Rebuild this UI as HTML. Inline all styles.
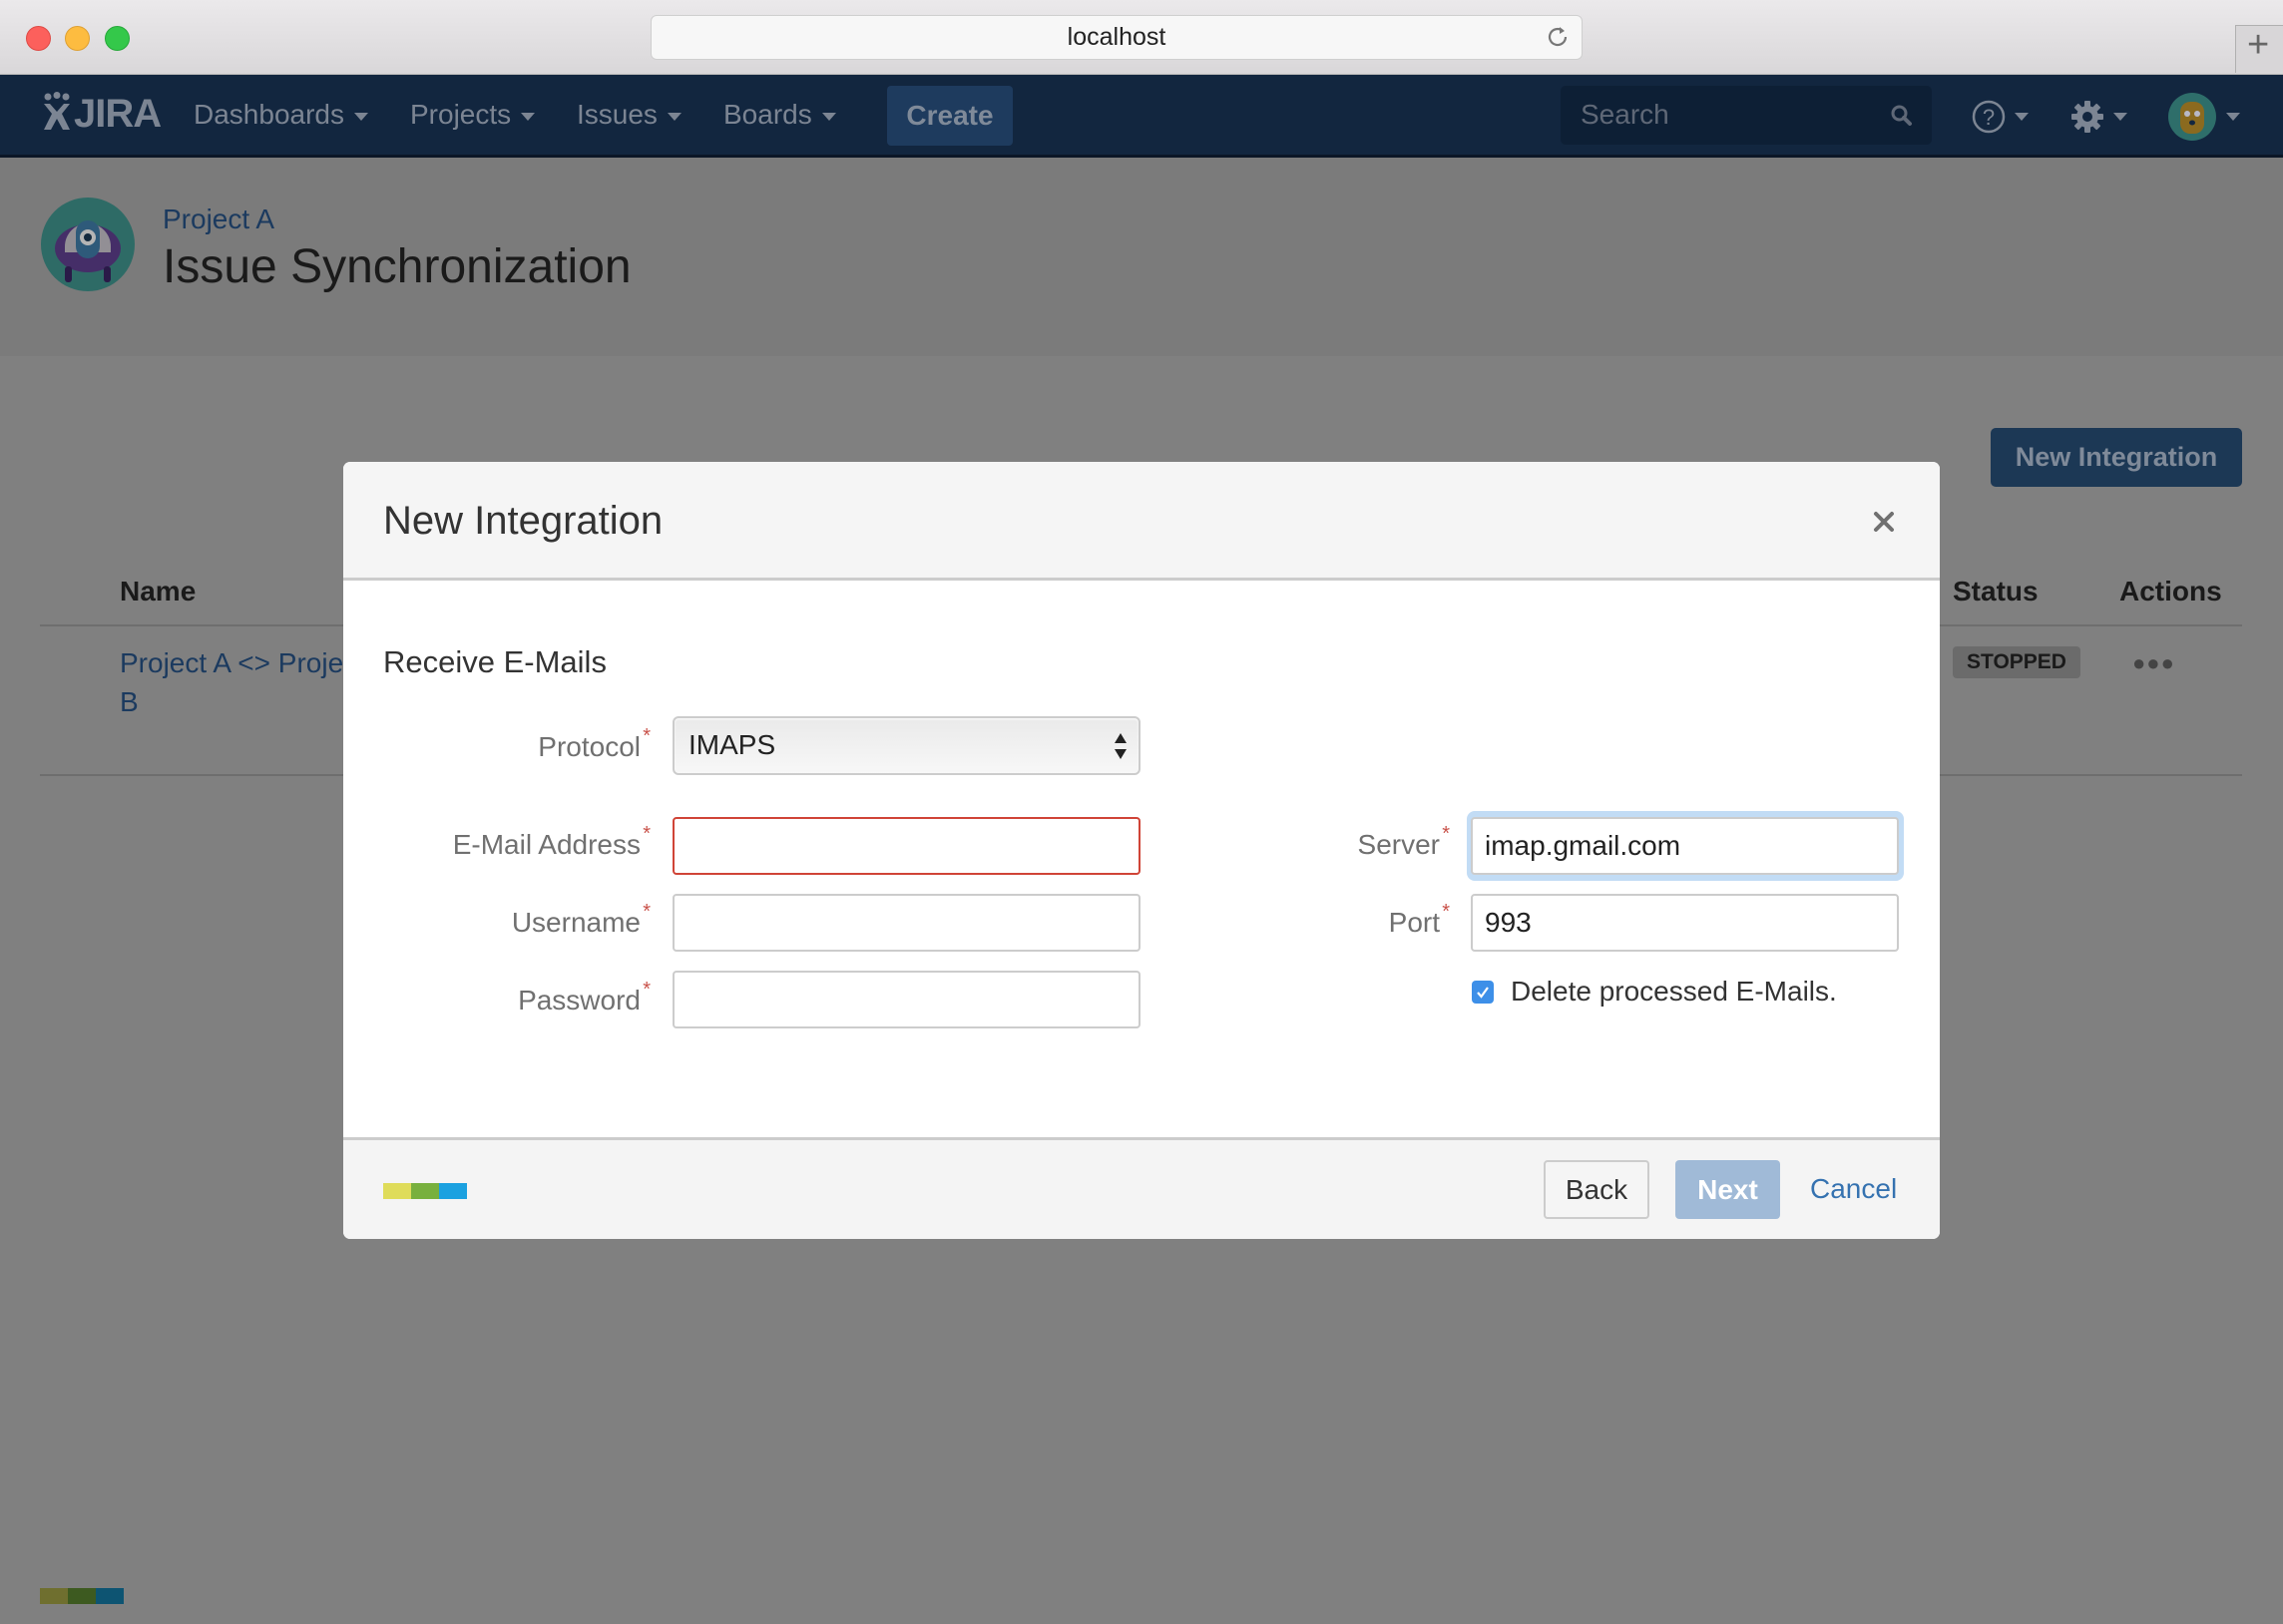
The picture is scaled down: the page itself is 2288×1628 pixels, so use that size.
<!DOCTYPE html>
<html><head><meta charset="utf-8">
<style>
*{box-sizing:border-box;margin:0;padding:0}
html,body{width:2288px;height:1628px;overflow:hidden}
body{position:relative;font-family:"Liberation Sans",Arial,sans-serif;background:#808080}
.a{position:absolute}
.titlebar{left:0;top:0;width:2288px;height:75px;background:linear-gradient(#ebe9eb,#d9d7d9);border-bottom:1px solid #b8b8b8}
.dot{width:25px;height:25px;border-radius:50%;top:26px}
.url{left:652px;top:15px;width:934px;height:45px;background:#f7f7f7;border:1px solid #cfcfcf;border-radius:6px;text-align:center;font-size:25px;line-height:43px;color:#222}
.nav{left:0;top:75px;width:2288px;height:83px;background:#12263f;border-bottom:3px solid #0b1626}
.nl{color:#7c8593;font-size:28px;top:99px}
.caret{display:inline-block;width:0;height:0;border-left:7px solid transparent;border-right:7px solid transparent;border-top:8px solid #7c8593;vertical-align:middle;margin-left:10px}
.hdr{left:0;top:158px;width:2288px;height:199px;background:#7b7b7b}
.th{font-weight:bold;font-size:28px;color:#1a1a1a;top:577px}
.modal{left:344px;top:463px;width:1600px;height:779px;background:#fff;border-radius:7px;overflow:hidden}
.lbl{font-size:28px;color:#707070;text-align:right}
.lbl sup{color:#c9524a;font-size:20px;position:absolute;right:-10px;top:-6px}
.inp{height:58px;border:2px solid #ccc;border-radius:4px;background:#fff;font-size:28px;color:#222;line-height:54px;padding-left:12px}
</style></head><body>
<div class="a titlebar"></div>
<div class="a dot" style="left:26px;background:#fc605c;border:1px solid #de4a45"></div>
<div class="a dot" style="left:65px;background:#fdbc40;border:1px solid #dea033"></div>
<div class="a dot" style="left:105px;background:#34c84a;border:1px solid #27a83a"></div>
<div class="a url">localhost</div>
<svg class="a" style="left:1548px;top:24px" width="26" height="26" viewBox="0 0 26 26"><path d="M21 13a8 8 0 1 1-3-6.2" fill="none" stroke="#777" stroke-width="2.2"/><path d="M15 3l5 4-5 3z" fill="#777"/></svg>
<div class="a" style="left:2240px;top:25px;width:48px;height:48px;background:#d8d6d8;border-left:1px solid #b0b0b0;border-top:1px solid #b0b0b0"></div>
<div class="a" style="left:2252px;top:24px;font-size:38px;color:#666;font-weight:300">+</div>

<div class="a nav"></div>
<svg class="a" style="left:42px;top:92px" width="30" height="42" viewBox="0 0 30 42"><circle cx="6" cy="5" r="3.5" fill="#7c8593"/><circle cx="15" cy="3.5" r="3.5" fill="#7c8593"/><circle cx="24" cy="5" r="3.5" fill="#7c8593"/><path d="M2 12l8 10-8 16h7l6-11 6 11h7l-8-16 8-10h-6l-7 8-7-8z" fill="#7c8593"/></svg>
<div class="a" style="left:74px;top:92px;font-size:40px;font-weight:bold;color:#7c8593;letter-spacing:-1px">JIRA</div>
<div class="a nl" style="left:194px">Dashboards<span class="caret"></span></div>
<div class="a nl" style="left:411px">Projects<span class="caret"></span></div>
<div class="a nl" style="left:578px">Issues<span class="caret"></span></div>
<div class="a nl" style="left:725px">Boards<span class="caret"></span></div>
<div class="a" style="left:889px;top:86px;width:126px;height:60px;background:#1e3b5e;border-radius:4px;color:#7f8a99;font-size:28px;font-weight:bold;text-align:center;line-height:60px">Create</div>
<div class="a" style="left:1564px;top:86px;width:372px;height:59px;background:#0d1f35;border-radius:5px"></div>
<div class="a" style="left:1584px;top:99px;font-size:28px;color:#5f6877">Search</div>
<svg class="a" style="left:1894px;top:104px" width="24" height="24" viewBox="0 0 24 24"><circle cx="9.5" cy="9.5" r="6.5" fill="none" stroke="#5f6877" stroke-width="3"/><path d="M14 14l6 6" stroke="#5f6877" stroke-width="4" stroke-linecap="round"/></svg>
<svg class="a" style="left:1975px;top:99px" width="36" height="36" viewBox="0 0 36 36"><circle cx="18" cy="18" r="15" fill="none" stroke="#7c8593" stroke-width="2.5"/><text x="18" y="26" text-anchor="middle" font-size="22" font-family="Liberation Sans" fill="#7c8593">?</text></svg>
<div class="a" style="left:2019px;top:108px"><span class="caret" style="margin:0"></span></div>
<svg class="a" style="left:2074px;top:99px" width="36" height="36" viewBox="0 0 36 36"><g fill="#7c8593"><circle cx="18" cy="18" r="11"/><rect x="15" y="2" width="6" height="32" rx="1"/><rect x="2" y="15" width="32" height="6" rx="1"/><rect x="15" y="2" width="6" height="32" rx="1" transform="rotate(45 18 18)"/><rect x="15" y="2" width="6" height="32" rx="1" transform="rotate(-45 18 18)"/></g><circle cx="18" cy="18" r="5" fill="#12263f"/></svg>
<div class="a" style="left:2118px;top:108px"><span class="caret" style="margin:0"></span></div>
<svg class="a" style="left:2172px;top:92px" width="50" height="50" viewBox="0 0 50 50"><ellipse cx="25" cy="25" rx="24" ry="24" fill="#2e6e6a"/><rect x="13" y="10" width="24" height="32" rx="10" fill="#8b6a1f"/><circle cx="20" cy="22" r="3" fill="#b8b8c8"/><circle cx="30" cy="22" r="3" fill="#b8b8c8"/><ellipse cx="25" cy="31" rx="3" ry="2.5" fill="#12263f"/></svg>
<div class="a" style="left:2231px;top:108px"><span class="caret" style="margin:0"></span></div>

<div class="a hdr"></div>
<svg class="a" style="left:40px;top:197px" width="96" height="96" viewBox="0 0 96 96"><circle cx="48" cy="48" r="47" fill="#2e6b66"/><ellipse cx="48" cy="52" rx="33" ry="24" fill="#452e68"/><path d="M25 50a23 23 0 0 1 46 0v6H25z" fill="#9a9a9a" opacity=".9"/><rect x="36" y="24" width="24" height="38" rx="12" fill="#2e5a7a"/><circle cx="48" cy="41" r="8" fill="#b5b5b5"/><circle cx="48" cy="41" r="4" fill="#142a3e"/><rect x="25" y="70" width="7" height="16" rx="3" fill="#2a1a48"/><rect x="64" y="70" width="7" height="16" rx="3" fill="#2a1a48"/></svg>
<div class="a" style="left:163px;top:204px;font-size:28px;color:#1b3a5f">Project A</div>
<div class="a" style="left:163px;top:240px;font-size:48px;color:#1a1a1a">Issue Synchronization</div>

<div class="a" style="left:1995px;top:429px;width:252px;height:59px;background:#1c3855;border-radius:5px;color:#7f8a99;font-size:27px;font-weight:bold;text-align:center;line-height:59px">New Integration</div>
<div class="a th" style="left:120px">Name</div>
<div class="a th" style="left:1957px">Status</div>
<div class="a th" style="left:2124px">Actions</div>
<div class="a" style="left:40px;top:626px;width:2207px;height:2px;background:#6e6e6e"></div>
<div class="a" style="left:120px;top:645px;font-size:28px;color:#1b3a5f;line-height:39px">Project A &lt;&gt; Project<br>B</div>
<div class="a" style="left:1957px;top:648px;width:128px;height:32px;background:#6b6b6b;border-radius:4px;font-size:21px;font-weight:bold;color:#1a1a1a;text-align:center;line-height:32px">STOPPED</div>
<div class="a" style="left:2137px;top:652px;font-size:22px;color:#444;letter-spacing:1px">&#9679;&#9679;&#9679;</div>
<div class="a" style="left:40px;top:776px;width:2207px;height:2px;background:#6e6e6e"></div>
<div class="a" style="left:40px;top:1592px;width:28px;height:16px;background:#6f6f2f"></div>
<div class="a" style="left:68px;top:1592px;width:28px;height:16px;background:#3d5a20"></div>
<div class="a" style="left:96px;top:1592px;width:28px;height:16px;background:#0d5472"></div>

<div class="a modal">
  <div class="a" style="left:0;top:0;width:1600px;height:119px;background:#f5f5f5;border-bottom:3px solid #ccc"></div>
  <div class="a" style="left:40px;top:37px;font-size:40px;color:#333">New Integration</div>
  <svg class="a" style="left:1533px;top:49px" width="22" height="22" viewBox="0 0 22 22"><path d="M3 3l16 16M19 3L3 19" stroke="#707070" stroke-width="4" stroke-linecap="round"/></svg>
  <div class="a" style="left:40px;top:183px;font-size:31px;color:#333">Receive E-Mails</div>

  <div class="a lbl" style="right:1302px;top:270px;position:absolute">Protocol<sup>*</sup></div>
  <div class="a" style="left:330px;top:255px;width:469px;height:59px;border:2px solid #ccc;border-radius:6px;background:linear-gradient(#eaeaea,#f7f7f7);box-shadow:inset 0 1px 2px #fff">
    <div class="a" style="left:14px;top:11px;font-size:28px;color:#222">IMAPS</div>
    <svg class="a" style="left:440px;top:14px" width="14" height="28" viewBox="0 0 14 28"><path d="M7 1l6 10H1zM7 27l6-10H1z" fill="#222"/></svg>
  </div>

  <div class="a lbl" style="right:1302px;top:368px">E-Mail Address<sup>*</sup></div>
  <div class="a inp" style="left:330px;top:356px;width:469px;border-color:#d04437"></div>
  <div class="a lbl" style="right:1302px;top:446px">Username<sup>*</sup></div>
  <div class="a inp" style="left:330px;top:433px;width:469px"></div>
  <div class="a lbl" style="right:1302px;top:524px">Password<sup>*</sup></div>
  <div class="a inp" style="left:330px;top:510px;width:469px"></div>

  <div class="a lbl" style="right:501px;top:368px">Server<sup>*</sup></div>
  <div class="a" style="left:1126px;top:350px;width:438px;height:70px;border-radius:8px;background:#c2dcf5"></div>
  <div class="a inp" style="left:1130px;top:356px;width:429px">imap.gmail.com</div>
  <div class="a lbl" style="right:501px;top:446px">Port<sup>*</sup></div>
  <div class="a inp" style="left:1130px;top:433px;width:429px">993</div>
  <div class="a" style="left:1131px;top:520px;width:22px;height:23px;background:#3d8fe8;border-radius:4px"></div>
  <svg class="a" style="left:1134px;top:524px" width="16" height="16" viewBox="0 0 16 16"><path d="M3 8l3.5 4L13 3" fill="none" stroke="#fff" stroke-width="2.2"/></svg>
  <div class="a" style="left:1170px;top:515px;font-size:28px;color:#333">Delete processed E-Mails.</div>

  <div class="a" style="left:0;top:677px;width:1600px;height:102px;background:#f4f4f4;border-top:3px solid #ccc"></div>
  <div class="a" style="left:40px;top:723px;width:28px;height:16px;background:#dfdc5a"></div>
  <div class="a" style="left:68px;top:723px;width:28px;height:16px;background:#78b03e"></div>
  <div class="a" style="left:96px;top:723px;width:28px;height:16px;background:#1ba1e0"></div>
  <div class="a" style="left:1203px;top:700px;width:106px;height:59px;border:2px solid #ccc;border-radius:4px;background:#f5f5f5;font-size:28px;color:#333;text-align:center;line-height:55px">Back</div>
  <div class="a" style="left:1335px;top:700px;width:105px;height:59px;border-radius:4px;background:#a0bad7;font-size:28px;font-weight:bold;color:#fff;text-align:center;line-height:59px">Next</div>
  <div class="a" style="left:1470px;top:713px;font-size:28px;color:#3572b0">Cancel</div>
</div>
</body></html>
